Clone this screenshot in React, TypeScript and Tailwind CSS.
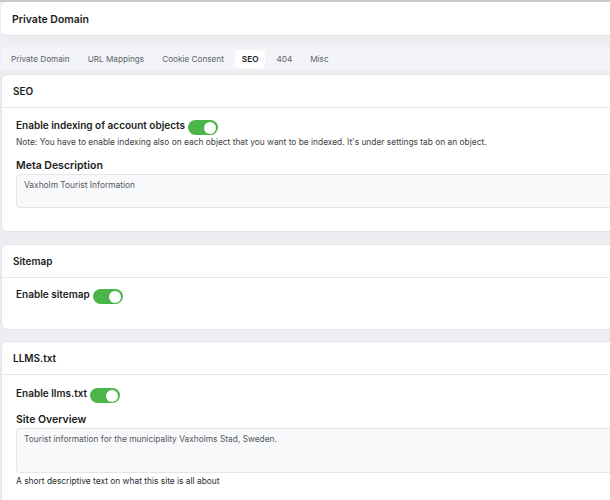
import React from "react";

function Toggle() {
  return (
    <span className="inline-flex h-[15px] w-[30px] translate-y-[2px] items-center justify-end rounded-full bg-[#4cb548] p-[2px] align-middle">
      <span className="h-[12px] w-[12px] rounded-full bg-white" />
    </span>
  );
}

export default function App() {
  const body = { fontFamily: "Inter, 'Liberation Sans', sans-serif" };
  return (
    <div className="h-[500px] w-[610px] overflow-hidden bg-[#eceef1]" style={body}>
      <div className="w-[640px] border-t-2 border-[#c9cacc]">
        <div className="ml-px flex h-[34px] items-center rounded-l-md border-b border-[#dfe1e4] bg-white pl-[11px] pt-[2px] text-[10.5px] font-semibold text-[#1b1d21]">
          Private Domain
        </div>
        <div className="ml-px mt-[11px] flex h-[23px] items-center gap-[4px] bg-[#f2f4f8] pl-[3px] pt-[1px] text-[8.2px] text-[#5d6169]">
          <span className="px-[7px]">Private Domain</span>
          <span className="px-[7px]">URL Mappings</span>
          <span className="px-[7px]">Cookie Consent</span>
          <span className="rounded-[4px] bg-white px-[7px] py-[3px] font-semibold text-[#1b1d21]">SEO</span>
          <span className="px-[7px]">404</span>
          <span className="px-[7px]">Misc</span>
        </div>

        <div className="ml-px mt-[4px] h-[158px] rounded-l-md border border-[#e1e3e6] bg-white">
          <div className="flex h-[33px] items-center border-b border-[#e7e8eb] pl-[11px] pt-[1px] text-[10px] font-semibold text-[#1b1d21]">SEO</div>
          <div className="pl-[14px] pt-[10px]">
            <div className="flex items-center gap-[3px] text-[10px] font-semibold text-[#1b1d21]">
              Enable indexing of account objects <Toggle />
            </div>
            <div className="mt-[3px] text-[8.4px] text-[#3c3f45]">
              Note: You have to enable indexing also on each object that you want to be indexed. It's under settings tab on an object.
            </div>
            <div className="mt-[9px] text-[10.5px] font-semibold text-[#1b1d21]">Meta Description</div>
            <div className="mt-px h-[34px] rounded-l-[4px] border border-[#e3e5e8] bg-[#f8f9fb] pl-[7px] pt-[4px] text-[8.4px] text-[#55585e]">
              Vaxholm Tourist Information
            </div>
          </div>
        </div>

        <div className="ml-px mt-[12px] h-[86px] rounded-l-md border border-[#e1e3e6] bg-white">
          <div className="flex h-[33px] items-center border-b border-[#e7e8eb] pl-[11px] pt-[1px] text-[10px] font-semibold text-[#1b1d21]">Sitemap</div>
          <div className="flex items-center gap-[3px] pl-[14px] pt-[9px] text-[10px] font-semibold text-[#1b1d21]">
            Enable sitemap <Toggle />
          </div>
        </div>

        <div className="ml-px mt-[11px] h-[170px] rounded-l-md border border-[#e1e3e6] bg-white">
          <div className="flex h-[33px] items-center border-b border-[#e7e8eb] pl-[11px] pt-[1px] text-[10px] font-semibold text-[#1b1d21]">LLMS.txt</div>
          <div className="pl-[14px] pt-[11px]">
            <div className="flex items-center gap-[3px] text-[10px] font-semibold text-[#1b1d21]">
              Enable llms.txt <Toggle />
            </div>
            <div className="mt-[11px] text-[10.5px] font-semibold text-[#1b1d21]">Site Overview</div>
            <div className="h-[45px] rounded-l-[4px] border border-[#e3e5e8] bg-[#f8f9fb] pl-[7px] pt-[4px] text-[8.4px] text-[#55585e]">
              Tourist information for the municipality Vaxholms Stad, Sweden.
            </div>
            <div className="mt-[2px] text-[8.4px] text-[#2a2d33]">A short descriptive text on what this site is all about</div>
          </div>
        </div>
      </div>
    </div>
  );
}
